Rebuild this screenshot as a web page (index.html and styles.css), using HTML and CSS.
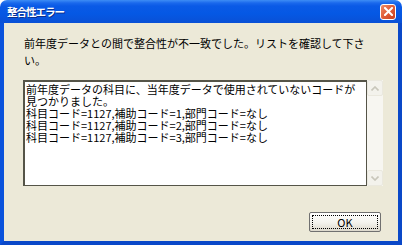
FILE: index.html
```html
<!DOCTYPE html>
<html lang="ja">
<head>
  <meta charset="UTF-8" />
  <title>整合性エラー</title>
  <link rel="stylesheet" href="styles.css">
</head>
<body>
  <div class="window">
    <!-- Title bar -->
    <div class="titlebar">
      <span class="title">整合性エラー</span>
      <span class="close-btn">
        <svg width="9" height="9" viewBox="0 0 9 9">
          <path d="M1 1 L8 8 M8 1 L1 8" stroke="#fff" stroke-width="2" stroke-linecap="square"/>
        </svg>
      </span>
    </div>

    <!-- Client area -->
    <div class="client">
      <p class="message">前年度データとの間で整合性が不一致でした。リストを確認して下さ<br>い。</p>

      <div class="listbox">
        <div class="list-text">前年度データの科目に、当年度データで使用されていないコードが<br>見つかりました。<br>科目コード=1127,補助コード=1,部門コード=なし<br>科目コード=1127,補助コード=2,部門コード=なし<br>科目コード=1127,補助コード=3,部門コード=なし</div>
        <div class="scrollbar">
          <span class="arrow">
            <svg width="8" height="5" viewBox="0 0 8 5"><path d="M0.5 4.5 L4 1 L7.5 4.5" fill="none" stroke="#c8c6ba" stroke-width="1.6"/></svg>
          </span>
          <span class="track"></span>
          <span class="arrow">
            <svg width="8" height="5" viewBox="0 0 8 5"><path d="M0.5 0.5 L4 4 L7.5 0.5" fill="none" stroke="#c8c6ba" stroke-width="1.6"/></svg>
          </span>
        </div>
      </div>

      <div class="buttons">
        <button class="ok-btn"><span class="focus">OK</span></button>
      </div>
    </div>
  </div>
</body>
</html>
```

FILE: styles.css
```css
* {
  box-sizing: border-box;
}

body {
  margin: 0;
  background-color: #ffffff;
  font-family: "Noto Sans CJK JP", "Noto Sans", sans-serif;
}

.window {
  width: 402px;
  height: 245px;
  display: flex;
  flex-direction: column;
}

.titlebar {
  height: 23px;
  display: flex;
  align-items: center;
  justify-content: space-between;
  padding: 0 6px 0 7px;
  border-radius: 7px 7px 0 0;
  background: linear-gradient(#3d8df5 0, #1a68ec 3px, #0a5ae6 6px, #0558e4 60%, #0a50d6 100%);
}

.title {
  color: #ffffff;
  font-size: 10.5px;
  font-weight: bold;
  letter-spacing: -1px;
  line-height: 12px;
  text-shadow: 1px 1px 0 #0a2f8c;
}

.close-btn {
  width: 16px;
  height: 16px;
  display: flex;
  align-items: center;
  justify-content: center;
  border: 1px solid #ffffff;
  border-radius: 3px;
  background: linear-gradient(135deg, #ec8c68, #e2603c 45%, #c9401e);
}

.client {
  flex: 1;
  display: flex;
  flex-direction: column;
  background-color: #ece9d8;
  border-left: 4px solid #0a52dc;
  border-right: 4px solid #0a48c8;
  border-bottom: 4px solid #0a48c8;
  padding: 0 15px 0 19px;
}

.message {
  margin: 12px 0 0 1px;
  font-size: 11px;
  line-height: 17px;
  color: #000000;
}

.listbox {
  margin-top: 11px;
  height: 106px;
  display: flex;
  background-color: #ffffff;
}

.list-text {
  flex: 1;
  border-left: 2px solid #555448;
  border-top: 2px solid #555448;
  border-right: 1px solid #555448;
  border-bottom: 1px solid #555448;
  padding: 1px 0 0 1px;
  font-size: 11px;
  line-height: 12px;
  color: #000000;
  white-space: nowrap;
}

.scrollbar {
  width: 16px;
  display: flex;
  flex-direction: column;
  background-color: #f7f6f1;
}

.arrow {
  height: 16px;
  display: flex;
  align-items: center;
  justify-content: center;
  border: 1px solid #eae8de;
  border-radius: 2px;
  background-color: #f3f2ec;
}

.track {
  flex: 1;
}

.buttons {
  display: flex;
  justify-content: flex-end;
  margin-top: 26px;
  padding-right: 2px;
}

.ok-btn {
  width: 72px;
  height: 20px;
  padding: 2px;
  border: 1px solid #707070;
  border-radius: 2px;
  background: linear-gradient(#ffffff, #f3f2ec 55%, #dcd8cc);
  font-family: "Noto Sans CJK JP", sans-serif;
  font-size: 11px;
  color: #000000;
}

.focus {
  display: flex;
  align-items: center;
  justify-content: center;
  height: 100%;
  border: 1px dotted #000000;
  line-height: 12px;
}
```
